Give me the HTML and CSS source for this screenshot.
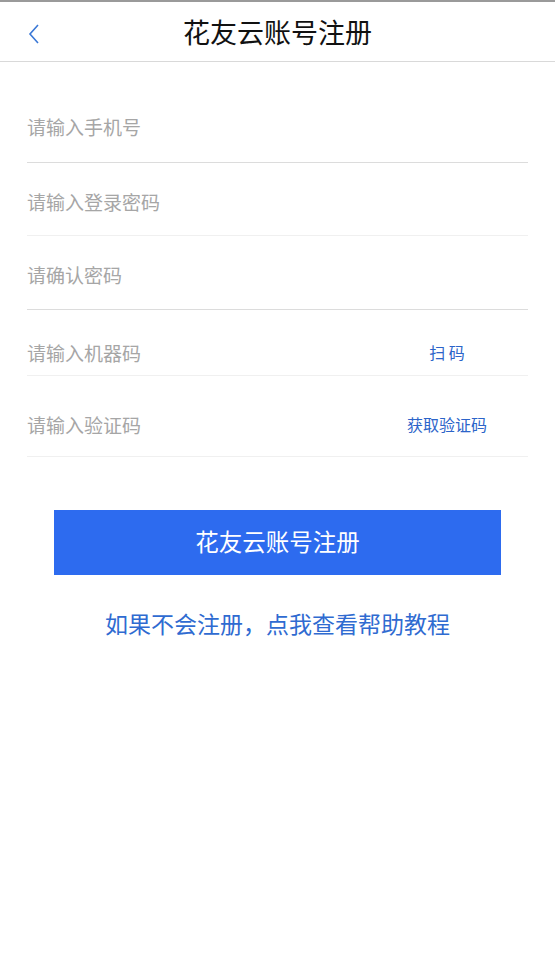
FILE: index.html
```html
<!DOCTYPE html>
<html>
<head>
	<meta charset="utf-8">
	<title>花友云账号注册</title>
	<link rel="stylesheet" href="styles.css">
</head>
<body>
	<div class="topbar"></div>
	<div class="header">
		<a class="back" href="#">
			<svg width="14" height="20" viewBox="0 0 14 20"><polyline points="11,1 3,10 11,19" fill="none" stroke="#3a78d6" stroke-width="1.6"/></svg>
		</a>
		<h1>花友云账号注册</h1>
	</div>
	<form class="form">
		<div class="field field-first"><input type="text" placeholder="请输入手机号"></div>
		<div class="field field-light field-pass"><input type="password" placeholder="请输入登录密码"></div>
		<div class="field"><input type="password" placeholder="请确认密码"></div>
		<div class="field field-light field-machine">
			<input type="text" placeholder="请输入机器码">
			<a class="action" href="#">扫 码</a>
		</div>
		<div class="field field-light field-code">
			<input type="text" placeholder="请输入验证码">
			<a class="action" href="#">获取验证码</a>
		</div>
		<button type="button" class="submit">花友云账号注册</button>
		<a class="help" href="#">如果不会注册，点我查看帮助教程</a>
	</form>
</body>
</html>
```

FILE: styles.css
```css
* {
	margin: 0;
	padding: 0;
	box-sizing: border-box;
}

html, body {
	background: #fff;
	font-family: "Noto Sans CJK SC", "Noto Sans", sans-serif;
}

.topbar {
	height: 2px;
	background: #9a9a9a;
}

.header {
	position: relative;
	height: 60px;
	border-bottom: 1px solid #d9d9d9;
	display: flex;
	align-items: center;
	justify-content: center;
}
.header h1 {
	font-size: 27px;
	font-weight: normal;
	color: #111;
	line-height: 58px;
}
.back {
	position: absolute;
	left: 27px;
	top: 22px;
	display: block;
	width: 14px;
	height: 20px;
}
.back svg {
	display: block;
}

.form {
	padding: 0 27px;
	display: flex;
	flex-direction: column;
}

.field {
	display: flex;
	align-items: center;
	padding: 26px 0 23px;
	border-bottom: 1px solid #dcdcdc;
}
.field-light {
	border-bottom-color: #f0f0f0;
}
.field-first {
	padding-top: 52px;
	padding-bottom: 24px;
}
.field-pass {
	padding-bottom: 22px;
}
.field-machine {
	padding-top: 30px;
	padding-bottom: 11px;
}
.field-code {
	padding-top: 36px;
	padding-bottom: 20px;
}

.field input {
	flex: 1;
	min-width: 0;
	height: 24px;
	border: none;
	outline: none;
	font-family: inherit;
	font-size: 19px;
	color: #333;
	background: transparent;
}
.field input::placeholder {
	color: #a6a6a6;
}

.action {
	width: 100px;
	margin-right: 31px;
	text-align: center;
	font-size: 16px;
	line-height: 24px;
	color: #2c64c9;
	text-decoration: none;
	white-space: pre;
}

.submit {
	margin: 53px 27px 0;
	height: 65px;
	padding-bottom: 4px;
	border: none;
	background: #2d6bef;
	color: #fff;
	font-family: inherit;
	font-size: 23.5px;
}

.help {
	margin-top: 33px;
	text-align: center;
	font-size: 23px;
	line-height: 30px;
	color: #2f6bd1;
	text-decoration: none;
}
```
